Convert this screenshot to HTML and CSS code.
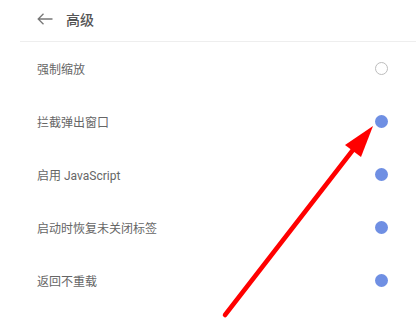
FILE: index.html
```html
<!DOCTYPE html>
<html lang="zh-CN">
<head>
    <meta charset="UTF-8">
    <title>高级</title>
    <link rel="stylesheet" href="styles.css">
</head>
<body>
    <div class="page">
        <div class="header">
            <svg class="back-icon" width="16" height="12" viewBox="0 0 16 12">
                <path d="M15.5 6H1.2M6.5 0.8L1.2 6L6.5 11.2" fill="none" stroke="#777" stroke-width="1.3"/>
            </svg>
            <span class="title">高级</span>
        </div>
        <div class="list">
            <div class="row">
                <span class="label">强制缩放</span>
                <span class="radio"></span>
            </div>
            <div class="row">
                <span class="label">拦截弹出窗口</span>
                <span class="radio on"></span>
            </div>
            <div class="row">
                <span class="label">启用 JavaScript</span>
                <span class="radio on"></span>
            </div>
            <div class="row">
                <span class="label">启动时恢复未关闭标签</span>
                <span class="radio on"></span>
            </div>
            <div class="row">
                <span class="label">返回不重载</span>
                <span class="radio on"></span>
            </div>
        </div>

        <!-- annotation arrow drawn over the screenshot -->
        <svg class="pointer" width="416" height="327" viewBox="0 0 416 327">
            <line x1="225" y1="315" x2="356" y2="146" stroke="#ff0000" stroke-width="4.5" stroke-linecap="round"/>
            <polygon points="373,126 345,145 361,157" fill="#ff0000"/>
        </svg>
    </div>
</body>
</html>
```

FILE: styles.css
```css
* {
    margin: 0;
    padding: 0;
    box-sizing: border-box;
}

body {
    background-color: #fff;
    font-family: Roboto, "Noto Sans CJK SC", sans-serif;
}

.page {
    width: 416px;
    height: 327px;
    position: relative;
    overflow: hidden;
}

.header {
    height: 42px;
    margin-left: 20px;
    padding-left: 17px;
    padding-bottom: 4px;
    display: flex;
    align-items: center;
    gap: 13px;
    border-bottom: 1px solid #eeeeee;
}

.back-icon {
    display: block;
}

.title {
    font-size: 14px;
    font-weight: 500;
    color: #555;
}

.list {
    padding: 0 28px 0 37px;
}

.row {
    height: 53px;
    display: flex;
    align-items: center;
    justify-content: space-between;
}

.label {
    font-size: 12px;
    color: #666;
}

.radio {
    width: 13px;
    height: 13px;
    border-radius: 50%;
    border: 1.5px solid #bdbdbd;
}

.radio.on {
    border: none;
    background-color: #6f8fe3;
}

.pointer {
    position: absolute;
    left: 0;
    top: 0;
}
```
